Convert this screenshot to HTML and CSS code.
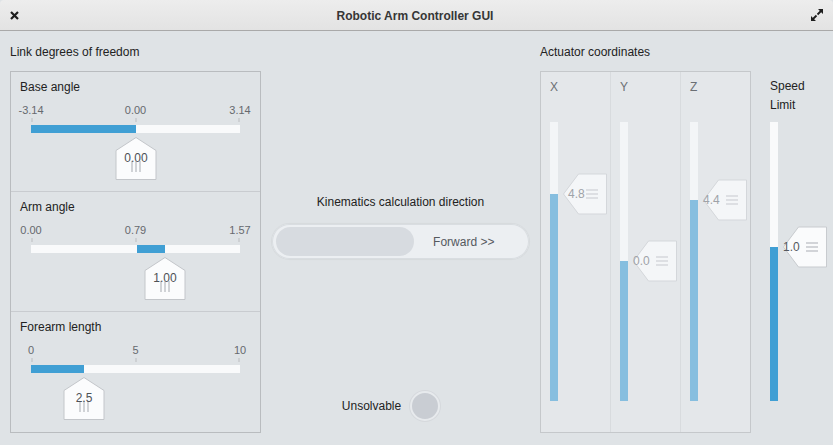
FILE: index.html
```html
<!DOCTYPE html>
<html>
<head>
<meta charset="utf-8">
<link rel="stylesheet" href="styles.css">
</head>
<body>
<div class="window">
  <header class="titlebar">
    <span class="tb-icon close"><svg width="9" height="9" viewBox="0 0 9 9"><path d="M1 1L8 8M8 1L1 8" stroke="#1e1e1e" stroke-width="2.2"/></svg></span>
    <span class="title">Robotic Arm Controller GUI</span>
    <span class="tb-icon max"><svg width="12" height="12" viewBox="0 0 12 12"><path d="M12 0L12 5L7 0Z M0 12L0 7L5 12Z" fill="#1e1e1e"/><path d="M6.5 5.5L10 2M5.5 6.5L2 10" stroke="#1e1e1e" stroke-width="1.8"/></svg></span>
  </header>
  <main class="content">
    <section class="col-left">
      <h2 class="heading">Link degrees of freedom</h2>
      <div class="group">
        <div class="row">
          <div class="row-label">Base angle</div>
          <div class="hslider">
            <div class="scale"><span>-3.14</span><span>0.00</span><span>3.14</span></div>
            <div class="ticks"><i></i><i></i><i></i></div>
            <div class="track">
              <div class="fill" style="left:0;width:50.2%"></div>
              <div class="hhandle" style="left:50%">
                <svg width="41" height="43" viewBox="0 0 41 43"><polygon points="0.5,13.5 20.5,0.5 40.5,13.5 40.5,42.5 0.5,42.5" class="hh-shape"/><path d="M16.5 24V35M20.5 24V35M24.5 24V35" class="hh-grip"/><text x="20.5" y="24.5" text-anchor="middle" class="hh-text">0.00</text></svg>
              </div>
            </div>
          </div>
        </div>
        <div class="row">
          <div class="row-label">Arm angle</div>
          <div class="hslider">
            <div class="scale"><span>0.00</span><span>0.79</span><span>1.57</span></div>
            <div class="ticks"><i></i><i></i><i></i></div>
            <div class="track">
              <div class="fill" style="left:50.7%;width:13.4%"></div>
              <div class="hhandle" style="left:64.1%">
                <svg width="41" height="43" viewBox="0 0 41 43"><polygon points="0.5,13.5 20.5,0.5 40.5,13.5 40.5,42.5 0.5,42.5" class="hh-shape"/><path d="M16.5 24V35M20.5 24V35M24.5 24V35" class="hh-grip"/><text x="20.5" y="24.5" text-anchor="middle" class="hh-text">1.00</text></svg>
              </div>
            </div>
          </div>
        </div>
        <div class="row last">
          <div class="row-label">Forearm length</div>
          <div class="hslider">
            <div class="scale"><span>0</span><span>5</span><span>10</span></div>
            <div class="ticks"><i></i><i></i><i></i></div>
            <div class="track">
              <div class="fill" style="left:0;width:25.4%"></div>
              <div class="hhandle" style="left:25.4%">
                <svg width="41" height="43" viewBox="0 0 41 43"><polygon points="0.5,13.5 20.5,0.5 40.5,13.5 40.5,42.5 0.5,42.5" class="hh-shape"/><path d="M16.5 24V35M20.5 24V35M24.5 24V35" class="hh-grip"/><text x="20.5" y="24.5" text-anchor="middle" class="hh-text">2.5</text></svg>
              </div>
            </div>
          </div>
        </div>
      </div>
    </section>

    <section class="col-mid">
      <div class="kin-title">Kinematics calculation direction</div>
      <div class="toggle">
        <div class="knob"></div>
        <div class="toggle-text">Forward &gt;&gt;</div>
      </div>
      <div class="status">
        <span>Unsolvable</span>
        <span class="led"></span>
      </div>
    </section>

    <section class="col-right">
      <h2 class="heading">Actuator coordinates</h2>
      <div class="coords">
        <div class="ccol">
          <div class="clabel">X</div>
          <div class="vtrack">
            <div class="vfill" style="height:74.2%"></div>
            <div class="vhandle" style="bottom:74.2%">
              <svg width="44" height="41" viewBox="0 0 44 41"><polygon points="0.5,20.5 15.5,0.5 43.5,0.5 43.5,40.5 15.5,40.5" class="vh-shape"/><path d="M23 16.5H35M23 20.5H35M23 24.5H35" class="vh-grip"/><text x="5" y="24.8" class="vh-text">4.8</text></svg>
            </div>
          </div>
        </div>
        <div class="ccol">
          <div class="clabel">Y</div>
          <div class="vtrack">
            <div class="vfill" style="height:50.2%"></div>
            <div class="vhandle" style="bottom:50.2%">
              <svg width="44" height="41" viewBox="0 0 44 41"><polygon points="0.5,20.5 15.5,0.5 43.5,0.5 43.5,40.5 15.5,40.5" class="vh-shape"/><path d="M23 16.5H35M23 20.5H35M23 24.5H35" class="vh-grip"/><text x="0" y="24.8" class="vh-text">0.0</text></svg>
            </div>
          </div>
        </div>
        <div class="ccol last">
          <div class="clabel">Z</div>
          <div class="vtrack">
            <div class="vfill" style="height:72%"></div>
            <div class="vhandle" style="bottom:72%">
              <svg width="44" height="41" viewBox="0 0 44 41"><polygon points="0.5,20.5 15.5,0.5 43.5,0.5 43.5,40.5 15.5,40.5" class="vh-shape"/><path d="M23 16.5H35M23 20.5H35M23 24.5H35" class="vh-grip"/><text x="0" y="24.8" class="vh-text">4.4</text></svg>
            </div>
          </div>
        </div>
      </div>
    </section>

    <section class="col-speed">
      <div class="speed-label">Speed Limit</div>
      <div class="vtrack speed">
        <div class="vfill" style="height:55.2%"></div>
        <div class="vhandle" style="bottom:55.2%">
          <svg width="44" height="41" viewBox="0 0 44 41"><polygon points="0.5,20.5 15.5,0.5 43.5,0.5 43.5,40.5 15.5,40.5" class="vh-shape"/><path d="M23 16.5H35M23 20.5H35M23 24.5H35" class="vh-grip"/><text x="0" y="24.8" class="vh-text">1.0</text></svg>
        </div>
      </div>
    </section>
  </main>
</div>
</body>
</html>
```
FILE: styles.css
```css
html, body {
  margin: 0;
  padding: 0;
}
body {
  width: 833px;
  height: 445px;
  overflow: hidden;
  background: #dfe3e6;
  font-family: "Liberation Sans", Arial, sans-serif;
  font-size: 12px;
  color: #222;
}
.window {
  width: 833px;
  height: 445px;
  display: flex;
  flex-direction: column;
}
.titlebar {
  height: 30px;
  flex: none;
  border-bottom: 1px solid #a9a9a9;
  background: linear-gradient(#ededed, #e3e3e3);
  display: flex;
  align-items: center;
  padding: 0 10px;
  border-radius: 4px 4px 0 0;
}
.tb-icon {
  display: flex;
}
.tb-icon.max {
  margin-top: -1px;
}
.title {
  flex: 1;
  text-align: center;
  font-weight: bold;
  color: #363636;
  margin-top: 1px;
}
.content {
  display: flex;
  padding-left: 10px;
  flex: 1;
}
.heading {
  margin: 14px 0 12px;
  font-size: 12px;
  font-weight: normal;
  line-height: 14px;
  color: #222;
}
.col-left {
  width: 251px;
  display: flex;
  flex-direction: column;
}
.group {
  border: 1px solid #b9bcbf;
  display: flex;
  flex-direction: column;
}
.row {
  height: 120px;
  box-sizing: border-box;
  padding: 8px 0 0 9px;
  border-bottom: 1px solid #c9ccd0;
}
.row.last {
  border-bottom: none;
  height: 120px;
}
.row-label {
  line-height: 14px;
  color: #222;
}
.hslider {
  margin: 9px 0 0 11px;
  width: 209px;
}
.scale {
  display: flex;
  justify-content: space-between;
  height: 14px;
  line-height: 14px;
  font-size: 11px;
  color: #66696e;
}
.scale span {
  width: 0;
  display: flex;
  justify-content: center;
  white-space: nowrap;
}
.ticks {
  display: flex;
  justify-content: space-between;
  height: 4px;
  margin-top: 1px;
}
.ticks i {
  width: 2px;
  background: #cdd0d3;
}
.track {
  position: relative;
  height: 8px;
  margin-top: 3px;
  background: #f9fafb;
}
.fill {
  position: absolute;
  top: 0;
  bottom: 0;
  background: #409fd4;
}
.hhandle {
  position: absolute;
  top: 12px;
  width: 41px;
  height: 43px;
  transform: translateX(-50%);
}
.hhandle svg, .vhandle svg {
  display: block;
  overflow: visible;
}
.hh-shape {
  fill: #fbfcfd;
  stroke: #c3c6ca;
  stroke-width: 1;
}
.hh-grip {
  stroke: #c6c9cd;
  stroke-width: 1.6;
}
.hh-text {
  font-family: "Liberation Sans", Arial, sans-serif;
  font-size: 12px;
  fill: #4d5156;
}
.col-mid {
  width: 279px;
  display: flex;
  flex-direction: column;
  align-items: center;
}
.kin-title {
  margin-top: 164px;
  line-height: 14px;
  color: #222;
}
.toggle {
  margin-top: 15px;
  width: 257px;
  height: 35px;
  box-sizing: border-box;
  border-radius: 18px;
  background: #eceff2;
  box-shadow: inset 0 0 0 1px #d9dde1, 0 0 1px 1px rgba(0, 0, 0, 0.04);
  display: grid;
  grid-template-columns: minmax(0, 1fr) minmax(0, 1fr);
  align-items: center;
  padding-left: 4px;
}
.knob {
  width: 138px;
  height: 29px;
  border-radius: 14.5px;
  background: #d7dbe0;
}
.toggle-text {
  text-align: center;
  color: #55595e;
  margin-left: -4px;
}
.status {
  margin-top: auto;
  margin-bottom: 24px;
  margin-right: 19px;
  display: flex;
  align-items: center;
  gap: 9px;
  color: #222;
}
.led {
  width: 26px;
  height: 26px;
  border-radius: 50%;
  background: #c9cdd3;
  border: 2px solid #e7eaed;
  box-shadow: 0 0 0 1px #d6d9dd;
}
.col-right {
  width: 211px;
  display: flex;
  flex-direction: column;
}
.coords {
  display: grid;
  grid-template-columns: 70px 70px 69px;
  border: 1px solid #c5c8cb;
  background: #e4e7ea;
  height: 360px;
}
.ccol {
  border-right: 1px solid #d8dbde;
  padding: 8px 0 0 9px;
}
.ccol.last {
  border-right: none;
}
.clabel {
  line-height: 14px;
  color: #6b6f74;
}
.vtrack {
  position: relative;
  width: 8px;
  height: 279px;
  margin-top: 28px;
  background: #f3f5f7;
}
.vfill {
  position: absolute;
  left: 0;
  right: 0;
  bottom: 0;
  background: #86bedf;
}
.vhandle {
  position: absolute;
  left: 13px;
  width: 44px;
  height: 41px;
  transform: translateY(50%);
}
.vh-shape {
  fill: #f4f6f8;
  stroke: #d4d7db;
  stroke-width: 1;
}
.vh-grip {
  stroke: #d5d8dc;
  stroke-width: 1.6;
}
.vh-text {
  font-family: "Liberation Sans", Arial, sans-serif;
  font-size: 12px;
  fill: #9fa3a8;
}
.col-speed {
  margin-left: 19px;
  padding-top: 46px;
}
.speed-label {
  width: 45px;
  line-height: 19px;
  color: #222;
}
.vtrack.speed {
  margin-top: 7px;
  background: #f9fafb;
}
.speed .vfill {
  background: #409fd4;
}
.speed .vh-shape {
  fill: #fafbfc;
  stroke: #c8cbcf;
}
.speed .vh-grip {
  stroke: #c5c8cc;
}
.speed .vh-text {
  fill: #55595e;
}
```
